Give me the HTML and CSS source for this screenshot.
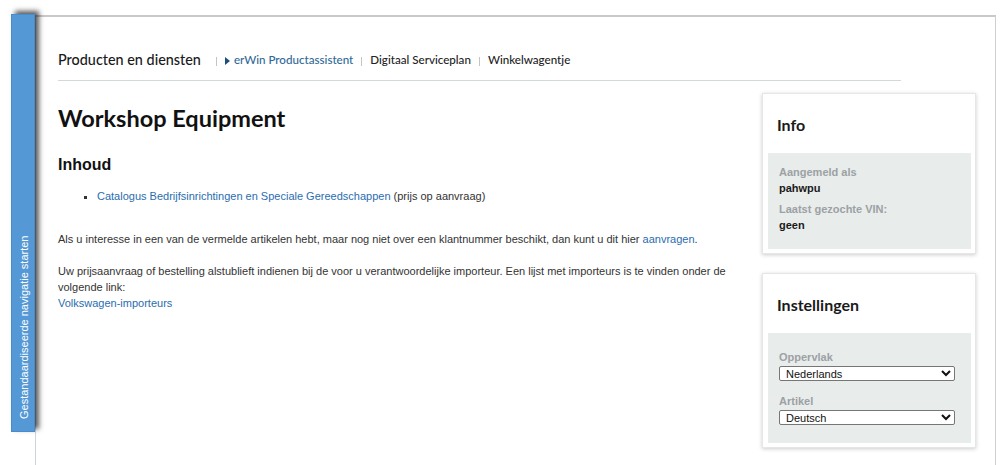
FILE: index.html
```html
<!DOCTYPE html>
<html lang="nl">
<head>
<meta charset="utf-8">
<title>Workshop Equipment</title>
<link rel="stylesheet" href="styles.css">
</head>
<body>
<div class="page">
  <div class="navtab"><span class="navtab-text">Gestandaardiseerde navigatie starten</span></div>
  <div class="frame">
    <div class="topnav">
      <span class="topnav-title">Producten en diensten</span>
      <span class="sep sep-first"></span>
      <span class="arrow"></span>
      <a class="topnav-link active" href="#">erWin Productassistent</a>
      <span class="sep"></span>
      <a class="topnav-link" href="#">Digitaal Serviceplan</a>
      <span class="sep"></span>
      <a class="topnav-link" href="#">Winkelwagentje</a>
    </div>
    <div class="row">
      <div class="main">
        <h1 class="title">Workshop Equipment</h1>
        <h2 class="subtitle">Inhoud</h2>
        <ul class="list">
          <li><a class="link" href="#">Catalogus Bedrijfsinrichtingen en Speciale Gereedschappen</a> (prijs op aanvraag)</li>
        </ul>
        <p class="para para-first">Als u interesse in een van de vermelde artikelen hebt, maar nog niet over een klantnummer beschikt, dan kunt u dit hier <a class="link" href="#">aanvragen</a>.</p>
        <p class="para">Uw prijsaanvraag of bestelling alstublieft indienen bij de voor u verantwoordelijke importeur. Een lijst met importeurs is te vinden onder de volgende link:<br><a class="link" href="#">Volkswagen-importeurs</a></p>
      </div>
      <aside class="sidebar">
        <div class="box">
          <div class="box-title">Info</div>
          <div class="panel panel-info">
            <div class="label">Aangemeld als</div>
            <div class="value">pahwpu</div>
            <div class="label label-next">Laatst gezochte VIN:</div>
            <div class="value">geen</div>
          </div>
        </div>
        <div class="box">
          <div class="box-title">Instellingen</div>
          <div class="panel panel-settings">
            <div class="label">Oppervlak</div>
            <select class="select"><option>Nederlands</option></select>
            <div class="label label-gap">Artikel</div>
            <select class="select"><option>Deutsch</option></select>
          </div>
        </div>
      </aside>
    </div>
  </div>
</div>
</body>
</html>
```
FILE: styles.css
```css
html, body {
  margin: 0;
  padding: 0;
  background: #fff;
}
body {
  font-family: "Liberation Sans", Arial, sans-serif;
  font-size: 11px;
  color: #333;
}
.page {
  display: flex;
  align-items: flex-start;
  padding: 14px 6px 0 11px;
  height: 465px;
  box-sizing: border-box;
  overflow: hidden;
}
.navtab {
  flex: none;
  width: 24px;
  height: 418px;
  box-sizing: border-box;
  background: #5598d6;
  border: 1px solid #4a8bcd;
  box-shadow: -4px 3px 5px rgba(0, 0, 0, 0.65);
  writing-mode: vertical-rl;
  transform: rotate(180deg);
  padding-top: 12px;
  line-height: 24px;
  color: #fff;
  font-size: 11px;
  white-space: nowrap;
}
.frame {
  flex: 1;
  margin-top: 1px;
  min-height: 460px;
  box-sizing: border-box;
  border-top: 2px solid #c9c9c9;
  border-left: 1px solid #cdd4db;
  border-right: 1px solid #d0d0d0;
  padding: 0 19px 0 22px;
}
.topnav {
  width: 843px;
  display: flex;
  align-items: center;
  padding-top: 33px;
  padding-bottom: 10px;
  height: 20px;
  line-height: 20px;
  border-bottom: 1px solid #d3d8db;
  font-family: Lato, "Liberation Sans", sans-serif;
}
.topnav-title {
  font-size: 14.4px;
  font-weight: 500;
  color: #1a1a1a;
}
.sep {
  display: inline-block;
  width: 0;
  height: 9px;
  border-left: 1px solid #c4c4c4;
  margin: 2px 8px 0;
}
.sep-first {
  margin-left: 15px;
  margin-right: 8px;
}
.arrow {
  display: inline-block;
  width: 0;
  height: 0;
  border-left: 5px solid #1d4f7c;
  border-top: 4px solid transparent;
  border-bottom: 4px solid transparent;
  margin-right: 4px;
  margin-top: 1px;
}
.topnav-link {
  font-size: 11.6px;
  font-weight: 500;
  color: #222;
  text-decoration: none;
}
.topnav-link.active {
  color: #2f6897;
}
.row {
  display: flex;
  align-items: flex-start;
}
.main {
  flex: 1;
  margin-right: 24px;
}
.title {
  margin: 22px 0 0;
  font-family: Lato, "Liberation Sans", sans-serif;
  font-size: 23.5px;
  line-height: 30px;
  font-weight: 700;
  color: #111;
}
.subtitle {
  margin: 22px 0 0;
  font-size: 16px;
  line-height: 19px;
  font-weight: 700;
  color: #111;
}
.list {
  margin: 14px 0 0;
  padding-left: 39px;
  list-style: square;
  line-height: 16px;
}
.para {
  margin: 16px 0 0;
  line-height: 16px;
}
.para-first {
  margin-top: 27px;
}
.link {
  color: #2a6db0;
  text-decoration: none;
}
.sidebar {
  flex: none;
  width: 214px;
  margin-top: 12px;
  display: flex;
  flex-direction: column;
  gap: 19px;
}
.box {
  background: #fff;
  border: 1px solid #e6e6e6;
  box-shadow: 0 1px 4px rgba(0, 0, 0, 0.2);
  padding: 0 4px 4px 5px;
}
.box-title {
  padding: 21px 9px 18px;
  font-family: Lato, "Liberation Sans", sans-serif;
  font-size: 16px;
  line-height: 20px;
  font-weight: 700;
  color: #1a1a1a;
}
.panel {
  background: #e8ecea;
  padding: 11px 11px 16px;
}
.panel-settings {
  padding-top: 16px;
  padding-bottom: 18px;
}
.label {
  font-weight: 700;
  color: #9ca1a5;
  line-height: 16px;
}
.label-next {
  margin-top: 5px;
}
.label-gap {
  margin-top: 12px;
}
.value {
  font-weight: 700;
  color: #1a1a1a;
  line-height: 16px;
}
.select {
  display: block;
  width: 176px;
  height: 15px;
  margin-top: 1px;
  padding: 0 0 0 2px;
  font-family: "Liberation Sans", Arial, sans-serif;
  font-size: 11px;
  color: #111;
  background: #fff;
  border: 1px solid #767676;
  border-radius: 2px;
  box-sizing: border-box;
}
```
